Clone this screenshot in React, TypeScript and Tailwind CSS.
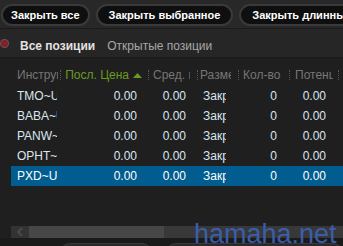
import React from 'react';

const rows = [
  { sym: 'TMO~U', sel: false },
  { sym: 'BABA~U', sel: false },
  { sym: 'PANW~U', sel: false },
  { sym: 'OPHT~U', sel: false },
  { sym: 'PXD~U', sel: true },
];

const Sep = () => <div className="h-[10px] w-0 shrink-0 border-l border-dotted border-[#555]" />;

const App: React.FC = () => {
  return (
    <div
      className="relative w-[343px] h-[246px] overflow-hidden bg-[#1f1f1f] text-[12px]"
      style={{ fontFamily: '"Liberation Sans", Arial, sans-serif' }}
    >
      {/* action buttons */}
      <div className="h-[29px] bg-[#282828] flex items-start gap-[6px] pl-[1px] pt-[4px] border-b border-[#1b1b1b]">
        <button className="h-[22px] px-[8px] rounded-full border-2 border-[#3a3a3a] bg-[#0f0f0f] text-white text-[11px] font-bold whitespace-nowrap shrink-0 leading-none">
          Закрыть все
        </button>
        <button className="h-[22px] px-[11px] rounded-full border-2 border-[#3a3a3a] bg-[#0f0f0f] text-white text-[11px] font-bold whitespace-nowrap shrink-0 leading-none">
          Закрыть выбранное
        </button>
        <button className="h-[22px] px-[11px] rounded-full border-2 border-[#3a3a3a] bg-[#0f0f0f] text-white text-[11px] font-bold whitespace-nowrap shrink-0 leading-none">
          Закрыть длинные
        </button>
      </div>

      {/* tabs */}
      <div className="h-[29px] pt-[5px] bg-[#262626] flex items-center border-b border-[#1a1a1a]">
        <div className="ml-[1px] -mt-[5px] w-[7px] h-[7px] rounded-full bg-[#8a1c22] ring-1 ring-[#5a5a5a]" />
        <span className="ml-[12px] font-bold text-[#e2e2e2]">Все позиции</span>
        <span className="ml-[12px] text-[#a8a8a8]">Открытые позиции</span>
      </div>

      {/* table */}
      <div className="pl-[11px] pt-[6px]">
        <div className="h-[22px] flex items-center text-[#767676] whitespace-nowrap">
          <div className="w-[49px] shrink-0 pl-[6px]">
            <div className="w-[41px] overflow-hidden">Инструмент</div>
          </div>
          <Sep />
          <div className="w-[87px] shrink-0 flex items-center justify-end gap-[4px] pr-[6px] overflow-hidden text-[#6b9a22]">
            <span>Посл. Цена</span>
            <svg width="9" height="5" viewBox="0 0 9 5"><path d="M0 5 L4.5 0 L9 5 Z" fill="#6b9a22" /></svg>
          </div>
          <Sep />
          <div className="w-[48px] shrink-0 pl-[4px]">
            <div className="w-[37px] overflow-hidden">Сред. цена</div>
          </div>
          <Sep />
          <div className="w-[40px] shrink-0 pl-[2px]">
            <div className="w-[31px] overflow-hidden">Размер</div>
          </div>
          <Sep />
          <div className="w-[50px] shrink-0 pl-[4px] overflow-hidden">Кол-во</div>
          <Sep />
          <div className="w-[48px] shrink-0 pl-[5px]">
            <div className="w-[38px] overflow-hidden">Потенциал</div>
          </div>
          <Sep />
          <div className="pl-[4px] overflow-hidden">Р</div>
        </div>

        {rows.map((r) => (
          <div
            key={r.sym}
            className={`h-[20px] flex items-center whitespace-nowrap ${r.sel ? 'bg-[#015d8f] text-white' : 'text-[#dbe6ef]'}`}
          >
            <div className="w-[52px] shrink-0 pl-[6px]">
              <div className="w-[40px] overflow-hidden">{r.sym}</div>
            </div>
            <div className="w-[85px] text-right pr-[11px] shrink-0">0.00</div>
            <div className="w-[49px] text-right pr-[11px] shrink-0">0.00</div>
            <div className="w-[40px] pl-[6px] shrink-0">
              <div className="w-[23px] overflow-hidden">Закрыть</div>
            </div>
            <div className="w-[50px] text-right pr-[10px] shrink-0">0</div>
            <div className="w-[48px] text-right pr-[9px] shrink-0">0.00</div>
          </div>
        ))}
      </div>

      {/* horizontal scrollbar */}
      <div className="absolute left-0 right-0 top-[226px] h-[12px] pl-[11px] flex">
        <div className="w-[18px] h-full bg-[#333] flex items-center justify-center">
          <svg width="6" height="8" viewBox="0 0 6 8"><path d="M5 0 L1 4 L5 8" stroke="#4a4a4a" strokeWidth="2" fill="none" /></svg>
        </div>
        <div className="w-[135px] h-full bg-[#474747]" />
        <div className="flex-1 h-full bg-[#383838]" />
      </div>

      {/* bottom strip */}
      <div className="absolute left-0 right-0 top-[238px] h-[8px] bg-[#1a1a1a] flex gap-[14px] pl-[60px] pt-[5px]">
        <div className="w-[94px] h-[10px] rounded-t-full border border-[#3a3a3a] bg-[#2a2a2a]" />
        <div className="w-[180px] h-[10px] rounded-t-full border border-[#3a3a3a] bg-[#2a2a2a]" />
      </div>

      {/* watermark */}
      <div
        className="absolute left-[194px] top-[221px] text-[27px] text-[#3c63b8] leading-none opacity-90"
        style={{ fontFamily: '"Liberation Sans", Arial, sans-serif' }}
      >
        hamaha.net
      </div>
    </div>
  );
};

export default App;
